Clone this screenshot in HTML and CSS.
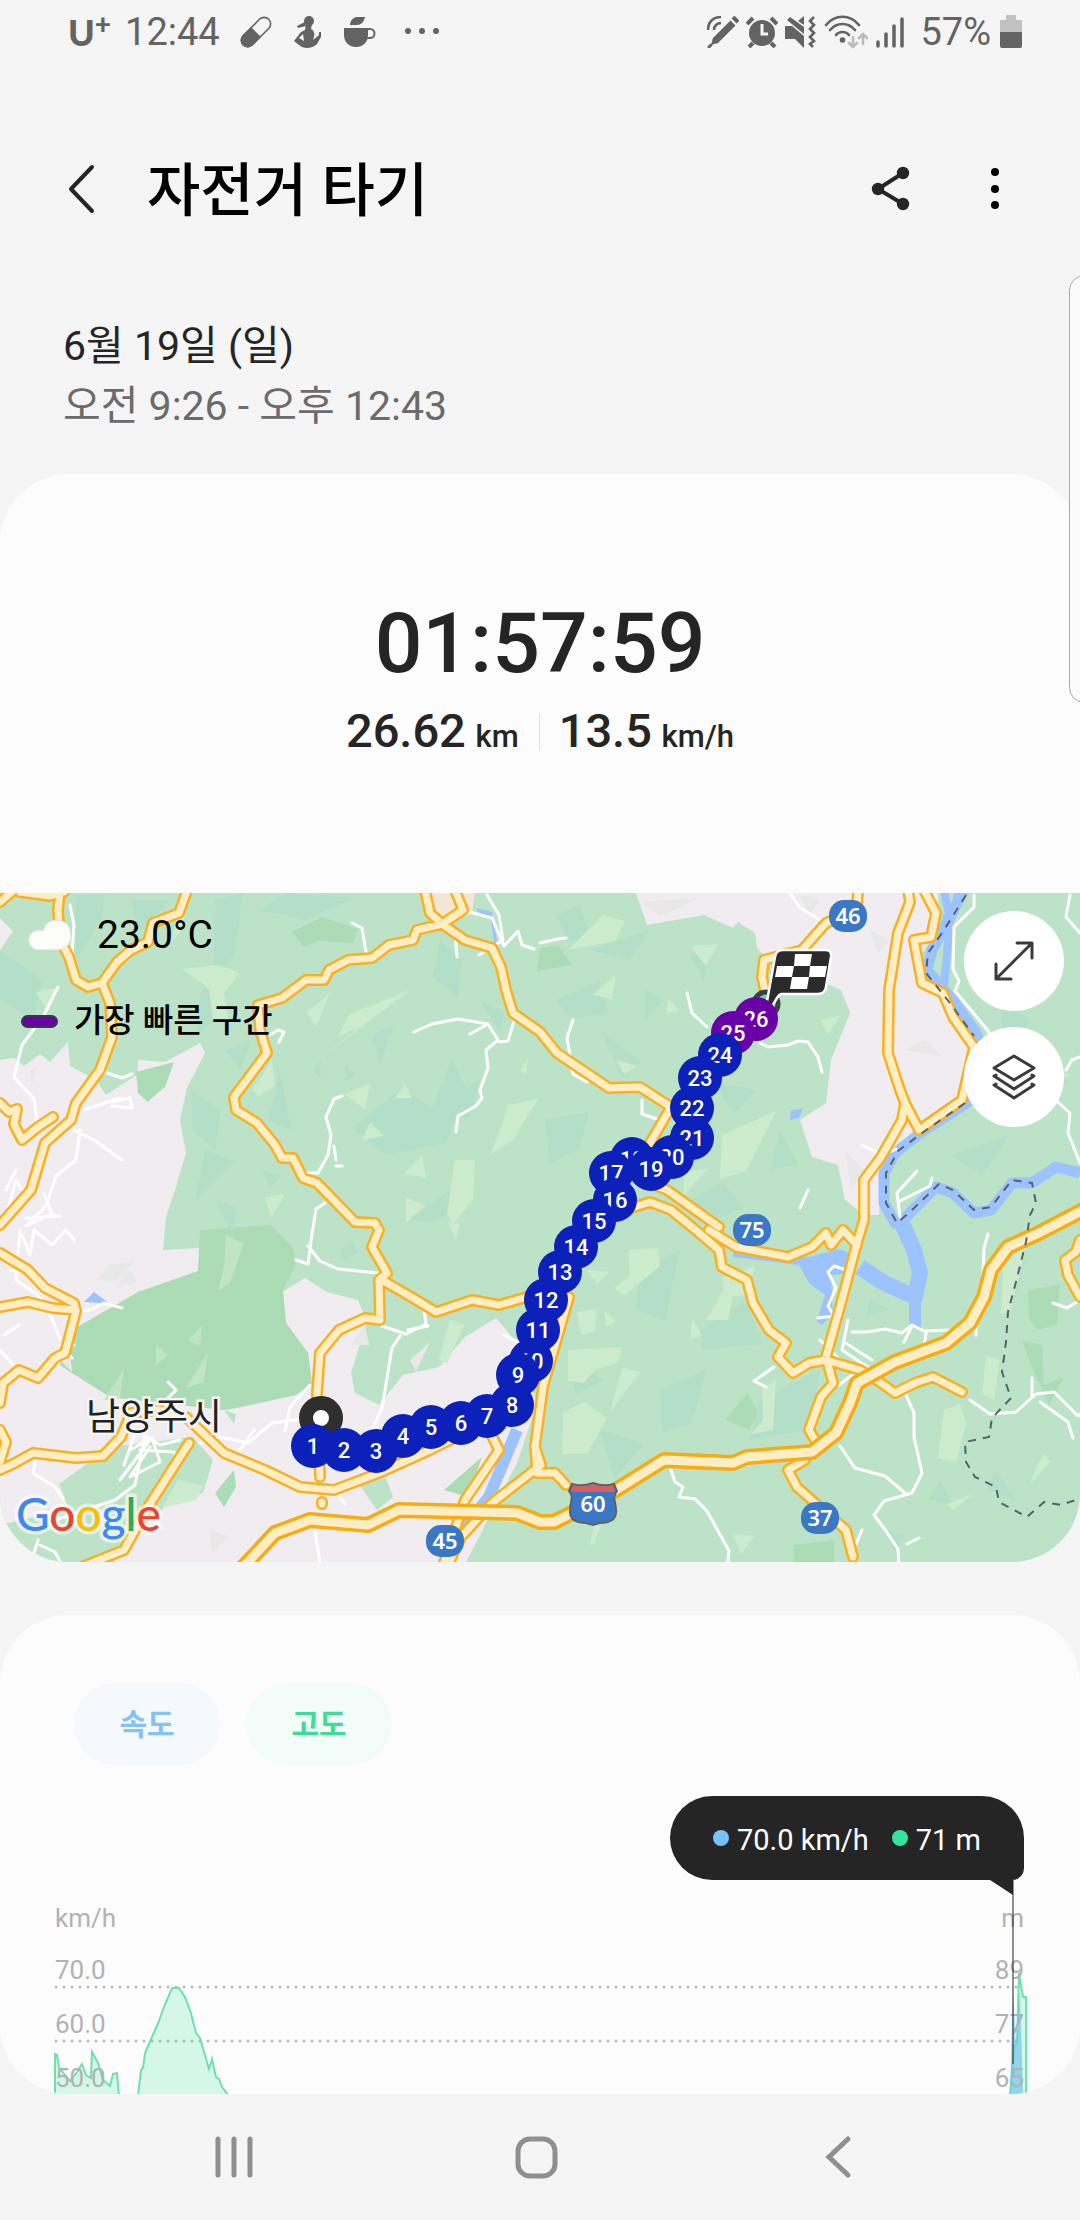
FILE: index.html
```html
<!DOCTYPE html>
<html lang="ko">
<head>
	<meta charset="UTF-8">
	<meta name="viewport" content="width=device-width">
	<title>자전거 타기</title>
	<link rel="stylesheet" href="styles.css">
</head>
<body>
<div class="status">
	<div class="status-left">
		<span class="carrier">U<sup>+</sup></span>
		<span>12:44</span>
		<svg width="32" height="32" viewBox="0 0 32 32"><g transform="rotate(45 16 16)"><rect x="9.5" y="-2" width="13" height="36" rx="6.5" fill="none" stroke="#636363" stroke-width="1.6"/><path d="M9 16h14v12a7 7 0 0 1-14 0z" fill="#636363"/></g></svg>
		<svg width="32" height="32" viewBox="0 0 32 32" fill="#636363"><circle cx="17" cy="5" r="5"/><path d="M13 6L5 10l1 2 8-2zM14 8h6l-1 5c4 2 4 6 2 11l6-5v-3h2v5l-4 7c-5 5-14 5-18 1l-5-4 7-9 4-2z"/><path d="M11 18l-4 4 5 3z" fill="#f5f5f5"/></svg>
		<svg width="32" height="32" viewBox="0 0 32 32" fill="#636363"><path d="M0 12h24v7c0 6-4 12-12 12S0 25 0 19zM6 9c0-5 4-8 7-8h8c-1 5-4 8-8 8z"/><path d="M23 13h3a4.500 4.500 0 0 1 0 9h-3" fill="none" stroke="#636363" stroke-width="2"/></svg>
		<svg width="48" height="32" viewBox="0 0 48 32" fill="#636363"><circle cx="12" cy="15" r="3"/><circle cx="26" cy="15" r="3"/><circle cx="40" cy="15" r="3"/></svg>
	</div>
	<div class="status-right">
		<svg width="32" height="32" viewBox="0 0 32 32" fill="none" stroke="#636363"><path d="M8 25L26 7" stroke-width="7"/><path d="M2 31l2-2" stroke-width="3" stroke-linecap="round"/><path d="M4 29l2-7 5 5z" fill="#636363" stroke="none"/><path d="M26 1l5 5" stroke-width="4"/><path d="M1 14C1 6 6 1 14 1M7 14c0-4 3-7 7-7" stroke-width="2.600"/></svg>
		<svg width="32" height="32" viewBox="0 0 32 32" fill="none" stroke="#636363"><circle cx="16" cy="17" r="13" fill="#636363" stroke="none"/><path d="M1 8l6-6M31 8l-6-6" stroke-width="4"/><path d="M7 27l-4 4M25 27l4 4" stroke-width="4"/><path d="M16 8v10h6" stroke="#f5f5f5" stroke-width="3"/></svg>
		<svg width="32" height="32" viewBox="0 0 32 32"><path d="M0 10h7l12 10v12l-9-9H0zM2 4l3-3 14 10v7zM13 5l6-5v9z" fill="#636363"/><path d="M29 1l-4 4 4 4-4 4 4 4-4 4 4 4-4 3 3 3" fill="none" stroke="#636363" stroke-width="2.600"/></svg>
		<svg width="44" height="34" viewBox="0 0 44 34" fill="none" stroke="#636363" stroke-width="2.600" stroke-linecap="round"><path d="M2 10C11-1 26-1 35 10M6 15c7-8 18-8 25 0M12 20c3-4 10-4 13 0"/><circle cx="18.500" cy="25" r="1.500" fill="#636363"/><path d="M29 22v10m-4-4l4 4 4-4M39 29V19m-4 4l4-4 4 4" stroke="#bbb"/></svg>
		<svg width="30" height="32" viewBox="0 0 30 32" stroke="#636363" stroke-width="3.500" stroke-linecap="round"><path d="M3 26v4M11 18v12M19 10v20M27 3v27"/></svg>
		<span class="percent">57%</span>
		<svg width="22" height="34" viewBox="0 0 22 34"><path d="M6 0h10v5h6v12H0V5h6z" fill="#c2c2c2"/><path d="M0 17h22v14q0 2-2 2H2q-2 0-2-2z" fill="#636363"/></svg>
	</div>
</div>

<header class="header">
	<button class="icon" aria-label="뒤로"><svg width="28" height="50" viewBox="0 0 28 50" fill="none" stroke="#252525" stroke-width="4" stroke-linecap="round" stroke-linejoin="round"><path d="M25 3L4 25l21 22"/></svg></button>
	<h1>자전거 타기</h1>
	<button class="icon" aria-label="공유"><svg width="40" height="46" viewBox="0 0 40 46"><path d="M33 7L8 23l25 15" fill="none" stroke="#252525" stroke-width="4"/><g fill="#252525"><circle cx="33" cy="7" r="6.200"/><circle cx="8" cy="23" r="6.200"/><circle cx="33" cy="38" r="6.200"/></g></svg></button>
	<button class="icon more" aria-label="더보기"><svg width="10" height="46" viewBox="0 0 10 46"><circle cx="5" cy="6" r="4"/><circle cx="5" cy="23" r="4"/><circle cx="5" cy="39" r="4"/></svg></button>
</header>

<div class="date">
	<p>6월 19일 (일)</p>
	<p class="hours">오전 9:26 - 오후 12:43</p>
</div>

<main>
<section class="summary">
	<p class="time">01:57:59</p>
	<div class="totals">
		<p>26.62 <small>km</small></p>
		<p>13.5 <small>km/h</small></p>
	</div>
</section>

<section class="map">
	<svg class="map-canvas" viewBox="0 3 1080 669">
		<defs>
			<g id="road-lines">
				<path d="M0 12L14 0M20 2l30 4 14-4M60 2l-2 18 2 30 9 17 7 23 12 7 14-4 15-21 14-12 17-8 5-19 26-10 9-25M102 93l8 20 2 34-12 33-24 33-5 17-26 23-14 47-31 35M0 213l9 9 8-3-3 15 8 16 16-13 15-10"/>
				<path d="M425 0l5 23 12 11 23 16 27 8 9 19 5 23 7 23 27 19 17 21 52 35 31-1 31 20-21 36-17 34 34 13 52 37M455 0l8 20-21 14-25 6-4 10-24 5-17 13-24 2-19 10-5 10h-18l-24 18-24 7 2 25 7 23-33 44 2 13 21 13 18 22 7 13h11l10 20 14 5 38 39 20 1 4 7-7 17 15 26-8 7 1 40-15-2-26 12-19 23-3 40 3 84M382 390l31 18 23 14 36-12 27 5 28-8M605 335l14-13 31-10 21 8 21 17 27 23 3 17 25 13 6 23 16 27 17 13-8 14 15 16 16-10 17-3 34 10 17 10 18 13 20-10 18-6 29 15M709 340l27 17 52 10 24-10 14-14 5 12 12-15 14 15"/>
				<path d="M908 0l2 12-12 31-9 57-1 63 12 37 5 13-3 17-21 37-17 23v40l-7 23-17 64-14 50 7 26-12 14-12 33 8 13M905 213l14 27 43-30 12-53-21-30-10-24-21-10-8-43 17-3 5-24-12-23M858 0l-1 20-31 13-24 27-38 10-2 17 5 23M805 570l-17 10 9 17 18 16 31 27 7 27M1080 350l-4 12-11 8 3 15 12 22"/>
				<path d="M0 363l28 17 17 18 29 15 2 8-11 42-10 5-17 20-19-8-16 13-3 20M0 417l28-5 24 6 24 2M0 540l6 12-6 20M0 580l15-7 18-10 43 5 27-2 18-19 10-24 27-3 28 7 38 36 41 17 35 17 34 3 45-17 51-23 40-20M189 553l-41 64-24 43-40 16M569 407l-26 90-8 60 6 18-49 38-31 34-14 30M489 540l10 20-34 50-22 66M535 555l2 28h18l11 12M322 612v2"/>
			</g>
			<path id="highway" d="M235 686l40-43 35-13 58 5 31-15 118 3 23 9h14l24-12 38-20 48-30 69 3 14-6 65-5 24-19 14-30 7-20 38-21 51-19 24-20 14-26 7-27 17-23 31-14 46-24"/>
		</defs>

		<rect width="1080" height="680" fill="#bce3c7"/>

		<!-- towns -->
		<g fill="#f0ecef">
			<path d="M0 28l13 13L0 60zM0 170l14-2 10 8 16-12 10 8 18-20 2 24 26 14 10 15 32-21v-14l27 2 35-19 5 10-18 35-7 32 6 33-11 37-9 27-3 33 37-2-2 23-33 14-27 7-24 15-42 23-12 35 26 17 24 15 114 13 14-2 58-13 16-12-4-30-22-30-4-31 23-14 22 14 31 8 9 22-16 51 4 20 24 12 24-30 36-8 26-30 31-19 21 25 20 60-20 60L462 680H0z"/>
			<path d="M636 3l11 32 57-10 29 13 5-6 17 11 2 15 9 9 75 33 9 23-19 47-5 43-26 17 12 37 26 8 7 35 19 15h15l2-42 17-26 24-14 43-30 11-56-50-64-4-30 17-26-1-34z"/>
		</g>
		<path d="M420 0h55l-3 24-30 10-12-11z" fill="#f4e6d4"/>
		<path d="M110 557l83-10 20 23-10 33-38 14-25 23-30 37H0v-42l69-16-10-25zM358 593l28-5 7 19-16 13zM224 520l12 4-2 10z" fill="#bce3c7"/>
		<g fill="#acdcb6">
			<path d="M200 340l70-5 23 22 3 18-13 25 3 33 22 30 4 30-16 12-72 15-114-13-50-32 12-35 66-38 60-21z"/>
			<path d="M136 182l38-10-9 25-12 10-5 5-10-9zM215 603l19-23 2 17-12 20zM444 600l38-33-14 40zM292 42l30-15 36 12-5 14-34-2-15 6z"/>
			<path d="M725 530l22-27 12 20-10 16zM794 655l40-5v30h-41zM1028 400l32-5-3 40-20 5-8-12zM1022 450l20 5 2 40 20-8-15 28-18-40zM540 58l-3 23 35-6-14-20z"/>
		</g>
		<!-- relief -->
		<g fill="#b3dfc9">
			<path d="M0 60l42 30-8 40-34-20zM75 5h30l-4 25-25 40zM130 10h40l-30 32zM215 10l28-7-8 60-22 30zM260 20l25-17 70 5-50 22zM208 90l8 40-20 15 4-40zM225 160l26-10-10 30zM192 200l28 20-4 40-24-20zM205 260l30 10-40 40zM280 180l12 60-24-10zM313 180l8-10v20zM345 175l12 10-12 6zM352 238l50-40 30 20 20-50 14 30-20 55-60 12-28-22zM440 50l22 20-4 38-26-22zM480 110l25 12-5 20zM372 145l22-10-14 40zM448 210l32-20-12 40zM262 280l20 5-12 12zM410 330l40-30 12 18-30 14zM214 310l24 8-6 24zM340 360l12-10 6 12-14 10z"/>
			<path d="M557 25l22-10 12 30-24 8zM590 60l60-20-20 30zM645 100l18 10-18 20zM690 65l22-8-8 34zM556 110l44-20 8 34-38 4zM600 140l42 32-20 16zM545 230l44-8-10 38-30 14zM712 190l44 10-22 24zM690 310l32-18 22 26-24 10zM780 240l18 34-28 6zM1000 110l30 20-24 50zM950 265l60-20-28 40zM1038 180l30 10-20 18zM640 380l40-20-14 70-30-10zM700 440l46-30 16 44-60 6zM660 500l46-20-14 54-30 8zM600 540l44 14-30 34zM760 510l60-30-10 60-60 10zM568 470l36 20-28 14zM885 640l20 5-10 17zM996 580l20 30-30-10zM1010 360l16 10-14 50-8-20zM940 590l14 24-26-4zM870 410l20 10-24 6z"/>
		</g>
		<g fill="#cdebcd">
			<path d="M180 5l12-2-12 40-8 8zM218 75l22 8-16 20 5 30-16-4-4-30-27-20zM60 60l12-8-6 20zM36 102l20-4-10 20zM318 170l92-70-60 24-12 22 20-8zM306 122l14-10 10-10-14 35zM344 204l26-10-5 25zM395 208l10-14 7 14zM362 250l8-18 14 14zM508 215l30-6-24 40-24 16 12-30zM455 270h20l-2 40-20 24-6-10zM404 284l18-18 4 22zM406 308l20 7-20 18zM265 307l20-3-14 24zM252 200l20-30 3 26-16 10zM448 332l12 2-4 16zM520 180l8-12-2 16z"/>
			<path d="M568 60l35-35 22 6-10 20zM592 105l24-20-4 24zM690 56l28-2-12 22zM668 110l12 10-14 4zM616 170l22 6-14 8zM710 130l32 8-20 10zM722 245l54-24-30 60-26 8zM685 282l24-4-26 28zM820 130l20-4-12 18zM1060 180l10 6-12 3zM1010 60l24-10-20 34z"/>
			<path d="M628 360l30-2 2 18-36 30-10-8 16-12zM587 380l22 2-12 12zM577 422l20-3-2 22-14 4zM604 420l12 12-10 4zM692 428l10 18-12 2zM706 430l18-30h10l-6 30zM722 388l34-12-12 30h-18zM568 460l54-3-4 16-22 6-12 14-16-2zM622 478l18 4-30 40zM563 522l22-10 22 16-20 36h-25zM762 498l14-8-3 50-22 4 12-14zM944 520l16-6 6 20-10 38-18-4zM590 655l6-28 6 5-8 22zM733 644l22 2-14 18zM1036 578l8-14 6 8-20 22zM1003 378l16-20 8-4-16 66-10 4zM986 466l14 4-6 40-12-6zM947 614l26-10-20 16zM450 430l14 5-17 38-8-3zM178 590l26 6-8 14-34 8z"/>
		</g>
		<g fill="#bfe5c4">
			<path d="M226 345l18 8-14 40-12 8 6-24zM188 450l14-14-2 20zM156 455l12 10-12 10zM104 510l20-32-4 30zM186 498l22-36-4 30z"/>
		</g>
		<g fill="#e8e8e8">
			<path d="M96 390l14-15 26-4-20 20zM115 398l14-18 8 12zM30 180l8-4-6 20zM350 455l15-20 4 20zM410 470l20-18-14 30zM870 40l20 10-12 14zM905 160l20-10 16 16zM800 5l20 4-10 16zM640 12l60-4-40 18zM845 260l20 20-14 20zM210 640l18 6-16 18zM60 470l10-10 2 22z"/>
		</g>

		<!-- water -->
		<g fill="none" stroke="#9dc3ff" stroke-linejoin="round">
			<path d="M964 0l-14 27-18 33-5 20 26 30 23 33 12 30-21 40-45 29-27 21-11 20v30l11 20 10-5 31-31 17 6 21 20 17-3 21-27h20l24-16 24 6" stroke-width="11"/>
			<path d="M944 0l6 30-6 67M958 3l-4 20-10 6" stroke-width="8"/>
			<path d="M902 333l12 27 6 23-5 24-31-14-24-16" stroke-width="16"/>
			<path d="M915 400v38M517 540l-28 67-31 40-10 30" stroke-width="12"/>
		</g>
		<path d="M733 358l76 9 30-8 20 8-8 16-20 2 2 40-12 10-4-4 8-26-16-12-10-18-66-8zM791 221l12-3-4 10-9 2zM84 412l10-10 16 12-24-2zM478 22l-2-4 16 4 8 46-5-8-4-30z" fill="#9dc3ff"/>

		<!-- side roads -->
		<g class="lane">
			<path d="M70 15l4 20-2 27M58 97l-15 30-21 28-8 32 20 22 4 30M84 220l36-12M112 212l18-4 2 10-20-2M74 240l20 10 28 20M80 240l-4 30-20 16-10 30-20 20 26-12-8-20M6 300l10-20M8 320l8-30 6 10M26 328l34-2M104 182l18 6 10-4M352 33l10 5 4 24M487 5l12 20 4 25-24 15M455 43l2 24M470 22l22 6 12 28 14-15 4 14 12 4M414 142l18-8 26-5 30 5 10 16-12 10 2 18-8 22 2 8-6 8-18 10-2 16M488 134l-18 10M500 152l8-1 6-20M342 206l-8 3-8 18 5 18-3 20-10 18h-12M334 256l2 14M336 276h6M325 313l-9 6-4 25-4 30-12-4M308 356l12 15 18 8 40 4M270 145l8-5 6 2-5 10"/>
			<path d="M22 345l8 20 4-25 18 15 14-15 8 10M20 340l-4 50 22 15 14 24 8 20M10 380l26 4 4 16M4 445l15-10M0 460l14 16M72 422l18-2 14-7 18 5M60 455h14M66 462l6 6M168 492l8 8-8 8M124 575l12-35 24 15 20-5M130 560l22-12 8 24-30 15 20-30M120 590l30-40M145 545l-10 50-20 15-60 20M140 560l34 2 6 12M38 558l-5 25 22 14 8 12M200 553l20-6 28 6 24-20 30-4M240 560l14-20M310 495l-20 22-5 24M366 560l6-20 10-22 10-60 8-12M382 436l24 8 20-10-2-16M315 640l6 40M335 600l10 14M32 670l6-20M40 655l15 7 8 15M408 440l20-4M504 445l16 8"/>
			<path d="M540 53l18-4 8-1M790 3l10 15 24 14M687 103l5 20 15 14M760 153l8 4 20-2 10-4 10 1 10 15 4 15M573 130l-6 18 6 36 14 8M642 210v14l18 6M862 255l20 10 14-6M900 327l-3-24 20-22M898 312l32-16 2-8M974 5v12l-20 20-1 42 6 12-4 10 25 30 20 25M1070 5l-4 22 14 16M1066 180l6-10 8-3M1050 205l20 18-2 20 12 30"/>
			<path d="M852 442h15l18-3 17 4 10-8 12 6 30-1 20-20 8-12 2-50 4-14M912 436l-8 16M926 442l-2 16M846 380l-12-4-6 6 8 16-8 18 6 10-16 2M848 430l-6 30 30 20M844 452l28 18M865 475l-26 20M820 450l22 22M774 477l-20 14 12 6M906 505l8 18v24l8 36-10 20-28 8-10 14 12 16 12 18 1 22 12 14M905 603l-20-17-30-8-15-22M907 654l12-6M970 510l20 14 26-2 20-18 18-2 24 24 22-20M1032 505v-17M1040 512l28 20 5 16M1053 413l14 5 13-8M671 580l4 12 8 5-4 10 16 2 12 12 22 40-2 20-14 2M862 640l-6 14M808 300l-8 18M976 445v-10"/>
		</g>

		<!-- main roads -->
		<use href="#road-lines" class="road casing"/>
		<use href="#road-lines" class="road surface"/>
		<use href="#highway" class="road highway-casing"/>
		<use href="#highway" class="road highway-surface"/>

		<path class="border" d="M966 5l-24 38-14 20-2 20 24 30 24 33M965 213l-43 30-24 18-12 22v30l11 20 14-12 28-27 14 6 21 20 17-3 21-27 20 3 4 20-6 12-4 27-10 40-8 30-2 30-4 30 9 26-19 20-3 19-24 5 1 20 9 15 21 10 3 15 28 15 17-15 17 3 20-7"/>

		<!-- road numbers -->
		<g class="shield">
			<rect x="829" y="10" width="38" height="32" rx="15"/><text x="848" y="34">46</text>
			<rect x="733" y="324" width="38" height="32" rx="15"/><text x="752" y="348">75</text>
			<rect x="426" y="635" width="38" height="32" rx="15"/><text x="445" y="659">45</text>
			<rect x="801" y="612" width="38" height="32" rx="15"/><text x="820" y="636">37</text>
			<path d="M572 594q10 3 21-1 11 4 21 1l3 7c-6 7 0 12-1 22-1 9-10 10-16 10l-7 2-7-2c-6 0-15-1-16-10-1-10 5-15-1-22z" stroke="#5f6368" stroke-width="2"/>
			<path d="M573 595q10 3 20-1 10 4 20 1l2 6-1 1h-42l-1-1z" class="shield-top"/>
			<text x="593" y="622">60</text>
		</g>
		<text class="city" x="86" y="540">남양주시</text>
		<text class="google" x="16" y="641"><tspan fill="#4285f4">G</tspan><tspan fill="#ea4335">o</tspan><tspan fill="#fbbc05">o</tspan><tspan fill="#4285f4">g</tspan><tspan fill="#34a853">l</tspan><tspan fill="#ea4335">e</tspan></text>

		<!-- finish -->
		<circle cx="766" cy="114" r="12" fill="#66d69e" stroke="#3c4043" stroke-width="5"/>
		<path d="M764 128l11-61q1-7 8-7h42q7 0 6 7l-5 30q-1 7-8 7h-36q-3 0-5 4l-7 12z" fill="#2b2b2b" stroke="#fff" stroke-width="2.500"/>
		<path d="M795 64h17l-2 12h-16zM777 76h17l-2 11h-17zM810 76h17l-2 11h-16zM792 87h17l-2 12h-17z" fill="#fff"/>
		<!-- start -->
		<circle cx="321" cy="528" r="15" fill="#fff" stroke="#2e2e2e" stroke-width="14"/>

		<g class="marker">
			<g class="fastest">
				<circle cx="756" cy="129" r="22"/><text x="756" y="137">26</text>
				<circle cx="733" cy="143" r="22"/><text x="733" y="151">25</text>
			</g>
			<circle cx="720" cy="165" r="22"/><text x="720" y="173">24</text>
			<circle cx="700" cy="188" r="22"/><text x="700" y="196">23</text>
			<circle cx="692" cy="248" r="22"/><text x="692" y="256">21</text>
			<circle cx="692" cy="218" r="22"/><text x="692" y="226">22</text>
			<circle cx="672" cy="267" r="22"/><text x="672" y="275">20</text>
			<circle cx="632" cy="269" r="22"/><text x="632" y="277">18</text>
			<circle cx="651" cy="279" r="22"/><text x="651" y="287">19</text>
			<circle cx="611" cy="283" r="22"/><text x="611" y="291">17</text>
			<circle cx="615" cy="310" r="22"/><text x="615" y="318">16</text>
			<circle cx="594" cy="331" r="22"/><text x="594" y="339">15</text>
			<circle cx="576" cy="357" r="22"/><text x="576" y="365">14</text>
			<circle cx="560" cy="382" r="22"/><text x="560" y="390">13</text>
			<circle cx="546" cy="410" r="22"/><text x="546" y="418">12</text>
			<circle cx="531" cy="471" r="22"/><text x="531" y="479">10</text>
			<circle cx="538" cy="440" r="22"/><text x="538" y="448">11</text>
			<circle cx="512" cy="515" r="22"/><text x="512" y="523">8</text>
			<circle cx="518" cy="485" r="22"/><text x="518" y="493">9</text>
			<circle cx="487" cy="526" r="22"/><text x="487" y="534">7</text>
			<circle cx="461" cy="533" r="22"/><text x="461" y="541">6</text>
			<circle cx="431" cy="537" r="22"/><text x="431" y="545">5</text>
			<circle cx="403" cy="546" r="22"/><text x="403" y="554">4</text>
			<circle cx="376" cy="561" r="22"/><text x="376" y="569">3</text>
			<circle cx="344" cy="560" r="22"/><text x="344" y="568">2</text>
			<circle cx="313" cy="556" r="22"/><text x="313" y="564">1</text>
		</g>
	</svg>

	<div class="map-info">
		<p class="weather">
			<svg width="46" height="34" viewBox="0 0 46 34"><path d="M11 32a10 10 0 1 1 5-19C18 5 23 2 30 2c9 0 14 7 14 15s-5 15-13 15z" fill="#fcfcfa" stroke="#dcdcd6"/></svg>
			<span>23.0°C</span>
		</p>
		<p class="legend"><i></i><span>가장 빠른 구간</span></p>
	</div>
	<div class="map-tools">
		<button aria-label="확대"><svg width="40" height="40" viewBox="0 0 40 40"><path d="M2 38L38 2M23 2h15v15M2 23v15h15"/></svg></button>
		<button aria-label="지도 유형"><svg width="44" height="46" viewBox="0 0 44 46"><path d="M22 2l20 12-20 12L2 14zM4 21l-2 1 20 13 20-13-2-1M4 30l-2 1 20 13 20-13-2-1"/></svg></button>
	</div>
</section>

<section class="graph">
	<div class="chips">
		<button class="speed">속도</button>
		<button class="altitude">고도</button>
	</div>
	<p class="tooltip"><i class="dot"></i>70.0 km/h<i class="dot green"></i>71 m</p>
	<svg class="chart" viewBox="0 0 970 194">
		<path class="grid" d="M1 87h968M1 141h968"/>
		<g class="area">
			<path d="M0 196V154l2 1 2 12 6 8 5 6 7-9 5-8 4 11 5 3 1-26 6 11 5 17 7 6 3-12 4-1 2 23z"/>
			<path d="M83 196l3-26 2-2 2-15 7-16 7-16 5-14 8-19h7l6 9 6 16 5 20 4 5 9 31 3-10 4 18 3 2 3 8 7 9z"/>
			<path d="M955 196l4-49 3-5 2-69 4 24h3v99z"/>
		</g>
		<path d="M955 194l3-107 3 60 4-58 3 105z" fill="#70c8ee" opacity=".7"/>
		<g class="labels">
			<text x="0" y="27">km/h</text>
			<text x="0" y="79">70.0</text>
			<text x="0" y="133">60.0</text>
			<text x="0" y="187">50.0</text>
			<g text-anchor="end">
				<text x="969" y="27">m</text>
				<text x="969" y="79">89</text>
				<text x="969" y="133">77</text>
				<text x="969" y="187">65</text>
			</g>
		</g>
		<path d="M958-20v184" stroke="#252525"/>
	</svg>
</section>
</main>

<nav class="nav">
	<button aria-label="최근 앱"><svg width="44" height="44" viewBox="0 0 44 44"><path d="M6 4v36M22 4v36M38 4v36"/></svg></button>
	<button aria-label="홈"><svg width="44" height="44" viewBox="0 0 44 44"><rect x="4" y="4" width="37" height="37" rx="12"/></svg></button>
	<button aria-label="뒤로"><svg width="44" height="44" viewBox="0 0 44 44"><path d="M32 4L13 22l19 18"/></svg></button>
</nav>
<div class="edge-panel"></div>
</body>
</html>
```

FILE: styles.css
```css
* { box-sizing: border-box; }

body {
	margin: 0;
	min-height: 100vh;
	display: flex;
	flex-direction: column;
	position: relative;
	overflow-x: hidden;
	background: #f5f5f5;
	color: #252525;
	font-family: Roboto, "Noto Sans CJK KR", sans-serif;
}

h1, p { margin: 0; }

svg { display: block; }

button {
	padding: 0;
	border: 0;
	background: none;
	font: inherit;
	color: inherit;
}

/* status bar */
.status {
	display: flex;
	justify-content: space-between;
	padding: 8px 58px 0 68px;
	height: 64px;
	font-size: 38px;
	line-height: 48px;
	color: #636363;
}

.status-left, .status-right {
	display: flex;
	height: 48px;
	align-items: center;
}

.status-left { gap: 20px; }

.status-right { gap: 7px; }

.carrier {
	margin-right: -6px;
	font-family: Lato, sans-serif;
	font-weight: 900;
	font-size: 36px;
}

.carrier sup {
	font-size: 28px;
	line-height: 0;
	vertical-align: 12px;
}

.percent { margin: 0 2px 0 8px; }

/* header */
.header {
	display: flex;
	align-items: center;
	padding: 0 80px 0 67px;
	margin-top: 60px;
	height: 130px;
}

.header h1 {
	flex: 1;
	margin-left: 52px;
	padding-top: 4px;
	font-size: 58px;
	font-weight: 500;
	line-height: 80px;
	color: #000;
}

.more { margin-left: 80px; }

.date {
	padding: 62px 63px 38px;
	font-size: 41px;
	line-height: 60px;
}

.hours { color: #6b6b6b; }

/* summary */
.summary {
	padding: 120px 20px 126px;
	border-radius: 68px 68px 0 0;
	background: #fcfcfc;
	text-align: center;
	font-weight: 500;
}

.time {
	font-size: 84px;
	line-height: 100px;
}

.totals {
	display: flex;
	justify-content: center;
	margin-top: 7px;
	font-size: 47px;
	line-height: 60px;
}

.totals p + p {
	margin-left: 20px;
	padding-left: 20px;
	background: linear-gradient(#e2e2e2, #e2e2e2) 0 12px / 1px 38px no-repeat;
}

.totals small {
	font-size: 31px;
	margin-left: -2px;
}

/* map */
.map {
	position: relative;
	overflow: hidden;
	border-radius: 0 0 68px 68px;
}

.map-canvas { width: 100%; }

.lane {
	fill: none;
	stroke: #fff;
	stroke-width: 3;
	stroke-linejoin: round;
	stroke-linecap: round;
}

.road {
	fill: none;
	stroke-linejoin: round;
	stroke-linecap: round;
}

.casing { stroke: #f9b022; stroke-width: 12; }

.surface { stroke: #ffeec4; stroke-width: 7; }

.highway-casing { stroke: #f9ab14; stroke-width: 16; }

.highway-surface { stroke: #ffeec4; stroke-width: 9; }

.border {
	fill: none;
	stroke: #56616b;
	stroke-width: 2;
	stroke-dasharray: 8 7;
}

.shield { fill: #3a78c6; }

.shield .shield-top { fill: #d66060; }

.shield text {
	fill: #fff;
	font: 600 22px "Noto Sans", sans-serif;
	text-anchor: middle;
}

.city {
	font: 400 37px "Noto Sans CJK KR", sans-serif;
	fill: #202124;
	stroke: #f5f5f5;
	stroke-width: 5;
	paint-order: stroke;
}

.google {
	font: 500 46px Lato, sans-serif;
	stroke: rgba(255, 255, 255, 0.6);
	stroke-width: 7;
	stroke-linejoin: round;
	paint-order: stroke;
}

.marker { fill: #0c21b9; }

.marker .fastest { fill: #6802a8; }

.marker text {
	fill: #fff;
	font-size: 22px;
	font-weight: 500;
	text-anchor: middle;
}

.map-info {
	position: absolute;
	top: 18px;
	left: 21px;
	color: #000;
}

.weather, .legend {
	display: flex;
	align-items: center;
}

.weather {
	gap: 24px;
	padding-left: 6px;
	font-size: 39px;
	line-height: 48px;
}

.legend {
	gap: 16px;
	margin-top: 38px;
	font-size: 33px;
	font-weight: 500;
	line-height: 48px;
}

.legend i {
	width: 37px;
	height: 13px;
	border: 2px solid #38364a;
	border-radius: 7px;
	background: #6802a8;
}

.map-tools {
	position: absolute;
	top: 18px;
	right: 16px;
	display: grid;
	gap: 16px;
}

.map-tools button {
	display: grid;
	place-items: center;
	width: 100px;
	height: 100px;
	border-radius: 50%;
	background: #fff;
}

.map-tools svg {
	fill: none;
	stroke: #3b3b3b;
	stroke-width: 3;
	stroke-linejoin: round;
	stroke-linecap: round;
}

/* graph */
.graph {
	margin-top: 53px;
	padding: 68px 55px 0;
	border-radius: 68px;
	background: #fcfcfc;
	overflow: hidden;
}

.chips {
	display: flex;
	gap: 26px;
	margin-left: 19px;
}

.chips button {
	width: 146px;
	height: 82px;
	padding-bottom: 4px;
	border-radius: 41px;
	font-size: 30px;
	font-weight: 700;
}

.chips .speed {
	color: #84c1f5;
	background: #f5f9fd;
}

.chips .altitude {
	color: #3ddc97;
	background: #f2fdf9;
}

.tooltip {
	position: relative;
	display: flex;
	align-items: center;
	width: fit-content;
	height: 84px;
	margin: 31px 1px 20px auto;
	padding: 4px 43px 0;
	border-radius: 42px 42px 12px 42px;
	background: #252525;
	color: #fff;
	font-size: 29px;
}

.tooltip::after {
	content: "";
	position: absolute;
	right: 11px;
	top: 100%;
	border-top: 15px solid #252525;
	border-left: 23px solid transparent;
}

.dot {
	width: 16px;
	height: 16px;
	margin: 0 8px 4px 0;
	border-radius: 50%;
	background: #78c1fa;
}

.dot.green {
	margin-left: 23px;
	background: #34e39c;
}

.chart {
	width: 100%;
	overflow: visible;
}

.grid {
	stroke: #bbb;
	stroke-width: 3;
	stroke-linecap: round;
	stroke-dasharray: 0 8;
}

.area {
	fill: rgba(61, 230, 150, 0.2);
	stroke: #70e0aa;
	stroke-width: 2;
}

.labels {
	fill: #b2b2b2;
	font-size: 26px;
}

/* navigation */
.nav {
	display: flex;
	gap: 258px;
	justify-content: center;
	align-items: center;
	height: 126px;
	padding-right: 8px;
}

.nav svg {
	fill: none;
	stroke: #8f8f8f;
	stroke-width: 5;
	stroke-linecap: round;
}

.edge-panel {
	position: absolute;
	top: 275px;
	right: -20px;
	width: 31px;
	height: 428px;
	border: 1px solid #aaa;
	border-radius: 16px;
	background: #fbfbfb;
}
```
